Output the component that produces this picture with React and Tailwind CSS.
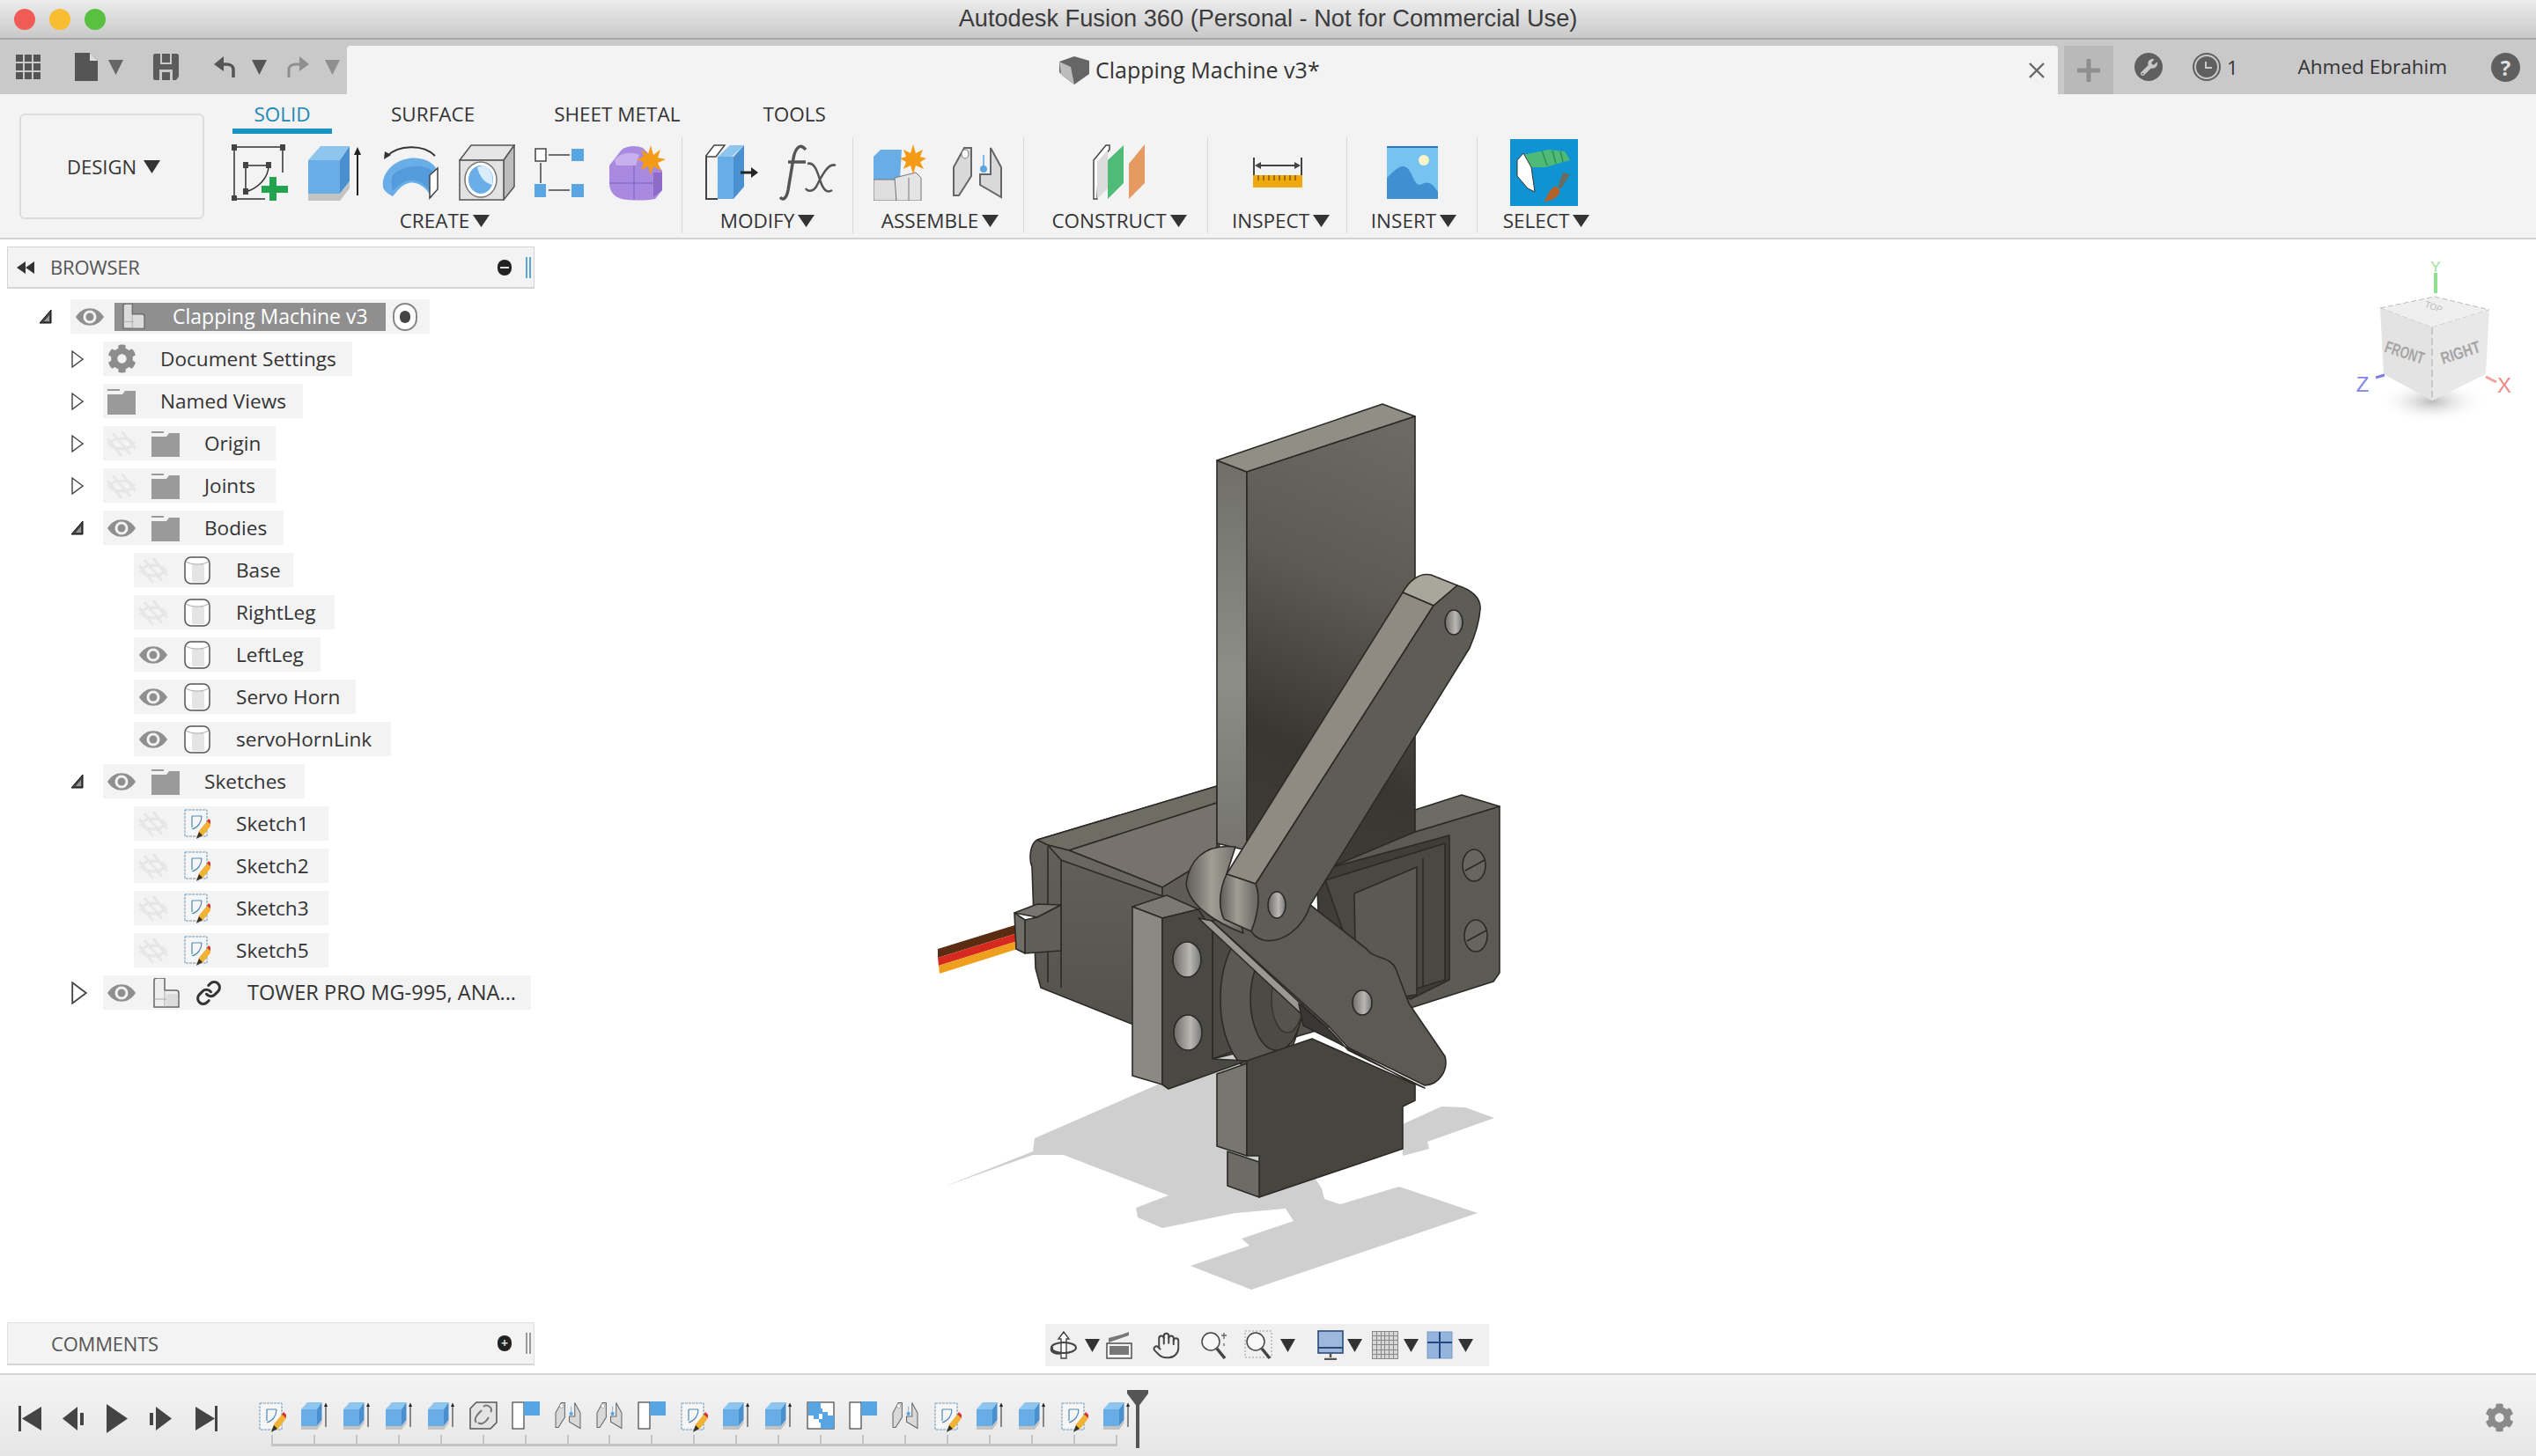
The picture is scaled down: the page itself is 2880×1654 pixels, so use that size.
import React from "react";
import { FaCog, FaWrench } from "react-icons/fa";
import { Link as LinkIcon, Hand } from "lucide-react";

const S = ({ w, h, vw, vh, children, className = "" }) => (
  <svg width={w} height={h} viewBox={`0 0 ${vw || w} ${vh || h}`} className={`shrink-0 block ${className}`}>{children}</svg>
);

const Caret = ({ w = 15, h = 13, c = "#333" }) => (
  <svg width={w} height={h} viewBox="0 0 10 10" preserveAspectRatio="none" className="shrink-0 block"><polygon points="0,0 10,0 5,10" fill={c} /></svg>
);

const SketchCreate = () => (
  <S w={64} h={64}>
    <g stroke="#333" strokeWidth="1.5" fill="none">
      <path d="M3 3H58M3 3V62M3 62H38M58 3V32" />
      <path d="M16 24V52M16 24H42M42 24C42 38 30 50 16 54" />
    </g>
    <g fill="#444">
      <rect x="0" y="0" width="6" height="7" /><rect x="55" y="0" width="6" height="7" /><rect x="0" y="58" width="6" height="7" />
      <rect x="13" y="20" width="6" height="7" /><rect x="39" y="20" width="6" height="7" /><rect x="13" y="50" width="6" height="7" />
    </g>
    <path d="M43 37H51V47H64V55H51V65H43V55H34V47H43Z" fill="#22a34f" />
  </S>
);
const Extrude = ({ w = 60, h = 64 }) => (
  <S w={w} h={h} vw={60} vh={64}>
    <polygon points="0,18 36,18 36,56 0,56" fill="#69ade6" />
    <polygon points="0,18 14,2 47,2 36,18" fill="#8ec5ef" />
    <polygon points="36,18 47,2 47,42 36,56" fill="#4a90d0" />
    <polygon points="0,56 36,56 47,42 47,50 36,64 0,64" fill="#c3c3c3" />
    <path d="M56 58V8" stroke="#222" strokeWidth="2" />
    <polygon points="52,12 56,3 60,12" fill="#222" />
  </S>
);
const Revolve = () => (
  <S w={64} h={62}>
    <path d="M6 12C18 0 46 -2 60 12" stroke="#333" strokeWidth="2" fill="none" />
    <polygon points="2,16 3,7 10,11" fill="#333" />
    <path d="M1 48C-1 32 12 18 30 15C44 13 58 18 62 28C62 40 62 48 56 60C50 46 38 41 30 43C22 45 18 51 12 58C8 56 3 53 1 48Z" fill="#6aaee8" />
    <path d="M12 34C20 24 44 20 56 28C60 34 58 46 54 52C46 40 34 38 26 41C20 44 16 48 12 52C10 46 10 40 12 34Z" fill="#539bdb" />
    <path d="M54 34L63 26V50L54 60Z" fill="#fff" stroke="#444" strokeWidth="1.5" />
  </S>
);
const Hole = () => (
  <S w={64} h={64}>
    <polygon points="1,18 14,1 63,1 51,18" fill="#e6e6e6" stroke="#555" strokeWidth="1.5" />
    <polygon points="51,18 63,1 63,48 51,63" fill="#bdbdbd" stroke="#555" strokeWidth="1.5" />
    <rect x="1" y="18" width="50" height="45" fill="#e3e3e3" stroke="#555" strokeWidth="1.5" />
    <ellipse cx="25" cy="40" rx="18" ry="20" fill="#fff" stroke="#777" strokeWidth="1.5" />
    <ellipse cx="25" cy="40" rx="14" ry="16" fill="#6aaee8" />
    <path d="M21 26C24 38 30 44 38 46C40 36 36 26 27 24Z" fill="#d9ecfb" />
  </S>
);
const Pattern = () => (
  <S w={56} h={60}>
    <rect x="1" y="3" width="12" height="14" fill="#fff" stroke="#444" strokeWidth="1.5" />
    <rect x="42" y="3" width="14" height="14" fill="#5aa6e2" />
    <rect x="0" y="43" width="13" height="15" fill="#5aa6e2" />
    <rect x="42" y="43" width="14" height="15" fill="#5aa6e2" />
    <path d="M16 10H40M7 19V42M16 50H40" stroke="#444" strokeWidth="1.5" />
  </S>
);
const PurpleNew = () => (
  <S w={64} h={64}>
    <path d="M14 6C20 1 32 1 38 4L48 14L60 30V52L52 62C40 64 26 64 14 62C6 60 0 54 0 44V24Z" fill="#a98ae0" />
    <path d="M6 18C12 9 26 8 34 12L30 24H8Z" fill="#c6b0ee" />
    <path d="M0 44H60M28 24V62" stroke="#8a6cc9" strokeWidth="1.5" fill="none" />
    <path d="M50 32H60V52L50 60Z" fill="#8c6bc9" />
    <polygon points="47,1 50,12 58,6 55,15 64,17 55,21 59,30 50,25 47,35 44,25 36,29 39,20 31,17 39,14 36,6 44,11" fill="#f39a16" />
  </S>
);
const PressPull = () => (
  <S w={60} h={64}>
    <polygon points="0,14 10,1 22,1 12,14" fill="#fff" stroke="#444" strokeWidth="1.5" />
    <path d="M1 14V62H14" stroke="#444" strokeWidth="2" fill="#f5f5f5" />
    <polygon points="14,14 28,1 44,1 30,14" fill="#8ec5ef" />
    <polygon points="14,14 32,14 32,62 14,62" fill="#69ade6" />
    <polygon points="32,14 44,1 44,48 32,62" fill="#4a90d0" />
    <path d="M40 32H54" stroke="#222" strokeWidth="3" />
    <polygon points="52,26 60,32 52,38" fill="#222" />
  </S>
);
const Fx = () => (
  <S w={66} h={64}>
    <path d="M30 6C24 -2 18 4 16 16L10 52C8 62 4 64 1 60" stroke="#555" strokeWidth="3.5" fill="none" />
    <path d="M10 20H30" stroke="#555" strokeWidth="3.5" />
    <path d="M32 22C38 20 42 26 46 40C50 52 54 56 60 52M64 24C56 20 48 36 42 48C38 54 32 54 30 50" stroke="#555" strokeWidth="2.5" fill="none" />
  </S>
);
const NewAssembly = () => (
  <S w={60} h={64}>
    <polygon points="0,14 8,6 32,6 30,40 0,40" fill="#69ade6" />
    <rect x="0" y="40" width="26" height="24" fill="#dedede" stroke="#777" />
    <polygon points="24,38 48,32 54,38 54,64 26,64" fill="#e4e4e4" stroke="#777" />
    <path d="M40 38V64" stroke="#777" />
    <polygon points="45,0 48,10 56,6 53,14 60,16 53,20 57,28 48,24 45,34 42,24 34,28 37,20 30,16 37,14 34,6 42,10" fill="#f39a16" />
  </S>
);
const Joint = ({ w = 58, h = 60 }) => (
  <S w={w} h={h} vw={58} vh={60}>
    <path d="M2 24L14 2H22V34L8 56H2Z" fill="#d9d9d9" stroke="#666" strokeWidth="2" />
    <path d="M56 24L44 2V32H32V44L56 58Z" fill="#d9d9d9" stroke="#666" strokeWidth="2" />
    <ellipse cx="15" cy="9" rx="4" ry="5" fill="#fff" stroke="#777" />
    <circle cx="36" cy="26" r="4" fill="#5aa6e2" />
    <path d="M36 10V22" stroke="#5aa6e2" strokeWidth="1.5" />
  </S>
);
const Construct = () => (
  <S w={60} h={64}>
    <polygon points="2,18 16,1 20,1 20,6 8,20 6,62 2,62" fill="#fff" stroke="#444" strokeWidth="1.5" />
    <polygon points="6,20 18,6 18,50 6,62" fill="#dcdcdc" />
    <polygon points="18,62 18,18 36,1 36,44" fill="#4fbb76" />
    <polygon points="42,62 42,22 60,0 60,44" fill="#e69a62" />
  </S>
);
const Inspect = () => (
  <S w={56} h={34}>
    <path d="M1 0V20M55 0V20M5 9H51" stroke="#444" strokeWidth="2" />
    <polygon points="2,9 9,5 9,13" fill="#444" /><polygon points="54,9 47,5 47,13" fill="#444" />
    <rect x="0" y="20" width="56" height="14" fill="#efa90e" />
    <path d="M6 20V26M12 20V26M18 20V26M24 20V26M30 20V26M36 20V26M42 20V26M48 20V26" stroke="#8a5a00" strokeWidth="1.5" />
  </S>
);
const Insert = () => (
  <S w={58} h={60}>
    <rect width="58" height="60" fill="#76c3f2" />
    <rect width="58" height="2" fill="#2d77b8" />
    <circle cx="42" cy="16" r="6" fill="#fff3c9" />
    <path d="M0 60V36C8 28 16 20 22 24C30 30 30 44 38 44C46 40 50 40 58 52V60Z" fill="#3f8fd1" />
  </S>
);
const SelectIcon = () => (
  <div className="w-[77px] h-[76px] bg-[#0f93d2] shrink-0">
    <S w={77} h={76}>
      <polygon points="14,18 44,12 62,14 68,24 40,32 22,32" fill="#4fb978" />
      <path d="M36 13L42 30M48 13L52 28M57 14L60 26" stroke="#2c8f54" strokeWidth="1.5" />
      <polygon points="8,24 15,16 24,32 28,60 20,56 8,42" fill="#fff" stroke="#333" strokeWidth="1" />
      <path d="M60 38L68 40L58 56L54 54Z" fill="#6b6b60" />
      <path d="M50 54C58 54 58 62 52 66C48 70 42 70 38 72C42 66 44 58 50 54Z" fill="#b5622a" />
    </S>
  </div>
);

const Eye = ({ off }) =>
  off ? (
    <S w={32} h={28}>
      <g stroke="#e6e6e6" strokeWidth="3" fill="none">
        <path d="M2 14C8 6 24 6 30 14C24 22 8 22 2 14Z" />
        <path d="M6 2L26 26M0 8L16 28M16 0L32 20" />
      </g>
    </S>
  ) : (
    <S w={32} h={24}>
      <path d="M0 12C8 -1 24 -1 32 12C24 25 8 25 0 12Z" fill="#8f8f8f" />
      <circle cx="16" cy="12" r="7.5" fill="#f3f3f3" />
      <circle cx="16" cy="12" r="4.5" fill="#8f8f8f" />
    </S>
  );
const Folder = () => (
  <S w={32} h={30}>
    <path d="M0 1H14V3H0Z" fill="#9a9a9a" />
    <path d="M0 7H17L20 3H32V30H0Z" fill="#9a9a9a" />
  </S>
);
const Body = () => (
  <S w={30} h={32}>
    <rect x="1" y="1" width="28" height="30" rx="7" fill="#fff" stroke="#555" strokeWidth="1.5" />
    <rect x="9" y="9" width="14" height="20" fill="#e4e4e4" />
    <path d="M2 6C8 10 22 10 28 6" stroke="#aaa" fill="none" />
  </S>
);
const SmallSketch = ({ w = 30, h = 36 }) => (
  <S w={w} h={h} vw={30} vh={36}>
    <rect x="1" y="2" width="25" height="30" fill="#f6f6f6" stroke="#6d98b8" strokeWidth="1" strokeDasharray="3 1" />
    <path d="M9 9H20M9 9V22M20 9C20 16 16 22 9 24" stroke="#4d89b5" strokeWidth="1.2" fill="none" />
    <polygon points="14,34 17,26 26,15 31,19 22,31" fill="#f2b233" />
    <polygon points="26,15 28,12 32,16 31,19" fill="#d8342c" />
    <polygon points="14,35 17,27 21,31" fill="#333" />
  </S>
);
const Comp = ({ w = 30, h = 34, fill = "#eee" }) => (
  <S w={w} h={h} vw={30} vh={34}>
    <path d="M1 33V3C1 1 2 0 4 0H13V14H26C28 14 29 15 29 17V33Z" fill={fill} stroke="#666" strokeWidth="1.5" />
    <path d="M13 14V33M1 24H29" stroke="#aaa" />
    <rect x="15" y="18" width="13" height="14" fill="#dcdcdc" />
  </S>
);
const ChevOpen = () => (
  <S w={14} h={16}><polygon points="13,0 13,15 0,15" fill="#444" stroke="#111" strokeWidth="1" /><polygon points="11,6 11,13 5,13" fill="#999" /></S>
);
const ChevClosed = ({ big }) => (
  <S w={big ? 20 : 14} h={big ? 26 : 20} vw={14} vh={20}><polygon points="1,1 13,10 1,19" fill="#fff" stroke="#444" strokeWidth="1.4" /></S>
);

const rows = [
  { d: 1, ch: "c", ico: "gear", t: "Document Settings", w: "w-[283px]" },
  { d: 1, ch: "c", ico: "folder", t: "Named Views", w: "w-[227px]" },
  { d: 1, ch: "c", eye: "off", ico: "folder", t: "Origin", w: "w-[196px]" },
  { d: 1, ch: "c", eye: "off", ico: "folder", t: "Joints", w: "w-[196px]" },
  { d: 1, ch: "o", eye: "on", ico: "folder", t: "Bodies", w: "w-[205px]" },
  { d: 2, eye: "off", ico: "body", t: "Base", w: "w-[181px]" },
  { d: 2, eye: "off", ico: "body", t: "RightLeg", w: "w-[228px]" },
  { d: 2, eye: "on", ico: "body", t: "LeftLeg", w: "w-[212px]" },
  { d: 2, eye: "on", ico: "body", t: "Servo Horn", w: "w-[252px]" },
  { d: 2, eye: "on", ico: "body", t: "servoHornLink", w: "w-[292px]" },
  { d: 1, ch: "o", eye: "on", ico: "folder", t: "Sketches", w: "w-[229px]" },
  { d: 2, eye: "off", ico: "sketch", t: "Sketch1", w: "w-[221px]" },
  { d: 2, eye: "off", ico: "sketch", t: "Sketch2", w: "w-[221px]" },
  { d: 2, eye: "off", ico: "sketch", t: "Sketch3", w: "w-[221px]" },
  { d: 2, eye: "off", ico: "sketch", t: "Sketch5", w: "w-[221px]" },
];

const Row = ({ r }) => {
  const icon = r.ico === "gear" ? <FaCog size={33} color="#8d8d8d" className="shrink-0" /> : r.ico === "folder" ? <Folder /> : r.ico === "body" ? <Body /> : <SmallSketch />;
  if (r.d === 2) {
    return (
      <div className="flex items-center h-[39px] ml-[152px]">
        <div className={`flex items-center h-[39px] bg-[#f3f3f3] pl-[6px] ${r.w}`}>
          <span className="w-[32px] flex justify-center shrink-0"><Eye off={r.eye === "off"} /></span>
          <span className="w-[30px] ml-[19px] shrink-0">{icon}</span>
          <span className="ml-[29px] whitespace-nowrap">{r.t}</span>
        </div>
      </div>
    );
  }
  return (
    <div className="flex items-center h-[39px] ml-[81px]">
      <span className="w-[36px] shrink-0">{r.ch === "c" ? <ChevClosed /> : <ChevOpen />}</span>
      <div className={`flex items-center h-[39px] bg-[#f3f3f3] pl-[5px] ${r.w}`}>
        {r.eye && <span className="w-[32px] flex justify-center shrink-0 mr-[18px]"><Eye off={r.eye === "off"} /></span>}
        <span className="w-[32px] shrink-0">{icon}</span>
        <span className="ml-[28px] whitespace-nowrap">{r.t}</span>
      </div>
    </div>
  );
};

const Group = ({ w, label, children, sep = true, lp = "" }) => (
  <div className={`flex flex-col items-center shrink-0 h-[109px] ${w} ${sep ? "border-r border-[#d8d8d8]" : ""}`}>
    <div className="flex items-center justify-center h-[80px] w-full">{children}</div>
    <div className={`flex items-center gap-[4px] h-[29px] text-[22.5px] text-[#333] ${lp}`}>
      <span>{label}</span><Caret w={19} h={14} />
    </div>
  </div>
);

const Model = () => (
  <svg className="absolute inset-0 block" width="2880" height="1288" viewBox="0 272 2880 1288">
    <defs>
      <linearGradient id="pf" gradientUnits="userSpaceOnUse" x1="1620" y1="480" x2="1420" y2="950">
        <stop offset="0" stopColor="#6c6c64" /><stop offset="0.4" stopColor="#5b5a53" /><stop offset="0.78" stopColor="#38362f" /><stop offset="1" stopColor="#3e3c36" />
      </linearGradient>
      <linearGradient id="ps" x1="0" y1="0" x2="0" y2="1">
        <stop offset="0" stopColor="#6f6e68" /><stop offset="0.55" stopColor="#8e8e89" /><stop offset="1" stopColor="#75746e" />
      </linearGradient>
      <linearGradient id="cy" x1="0" y1="0" x2="1" y2="0">
        <stop offset="0" stopColor="#5d5c56" /><stop offset="0.45" stopColor="#a09e95" /><stop offset="1" stopColor="#66655e" />
      </linearGradient>
      <linearGradient id="ho" x1="0" y1="0" x2="1" y2="0">
        <stop offset="0" stopColor="#6b6a66" /><stop offset="0.6" stopColor="#b9b8b3" /><stop offset="1" stopColor="#77767a" />
      </linearGradient>
      <linearGradient id="bd" x1="0" y1="0" x2="0" y2="1">
        <stop offset="0" stopColor="#66645d" /><stop offset="1" stopColor="#54524b" />
      </linearGradient>
    </defs>
    <g fill="#cfcfcf">
      <polygon points="1072,1348 1173,1308 1175,1293 1400,1195 1501,1350 1504,1362 1522,1368 1589,1348 1678,1378 1421,1465 1352,1438 1419,1415 1410,1407 1469,1387 1460,1373 1403,1378 1320,1395 1292,1383 1290,1372 1327,1358 1208,1312 1173,1312" />
      <polygon points="1593,1277 1637,1257 1664,1258 1697,1270 1621,1297 1623,1305 1593,1313" />
    </g>
    <g stroke="#2b2a27" strokeWidth="1.6" strokeLinejoin="round">
      <polygon points="1065,1078 1162,1048 1162,1058 1065,1088" fill="#5a2c12" stroke="none" />
      <polygon points="1065,1088 1162,1058 1162,1067 1066,1097" fill="#d62a1f" stroke="none" />
      <polygon points="1066,1097 1162,1067 1162,1076 1067,1106" fill="#ef9f1e" stroke="none" />
      {/* servo body */}
      <path d="M1178,954 C1170,958 1168,975 1172,985 L1176,1100 L1182,1122 L1290,1165 L1390,1100 L1382,893 Z" fill="url(#bd)" />
      <polygon points="1178,954 1382,893 1382,912 1214,966 1190,960" fill="#6f6c64" />
      <polygon points="1214,966 1382,912 1382,970 1320,1008" fill="#77736c" />
      <polygon points="1190,960 1214,966 1320,1008 1320,1018 1205,977" fill="#68665f" />
      <path d="M1190,962V1116M1205,977V1122" fill="none" />
      {/* connector */}
      <polygon points="1152,1037 1178,1027 1205,1028 1178,1042" fill="#77756e" />
      <polygon points="1178,1042 1205,1028 1205,1080 1164,1083 1164,1045" fill="#5f5e57" />
      <polygon points="1152,1037 1164,1045 1164,1083 1154,1078" fill="#706e67" />
      {/* plate */}
      <polygon points="1382,523 1416,536 1416,966 1382,958" fill="url(#ps)" />
      <polygon points="1382,523 1570,459 1607,473 1416,536" fill="#908f86" />
      <polygon points="1416,536 1607,473 1607,960 1416,1020" fill="url(#pf)" />
      {/* right flange */}
      <polygon points="1607,945 1703,916 1703,1105 1696,1115 1602,1145 1500,1110 1500,990" fill="#5b5a53" />
      <polygon points="1607,920 1660,903 1703,916 1607,945" fill="#6d6c64" />
      <polygon points="1495,990 1646,949 1646,1113 1602,1135 1500,1100" fill="#3f3d38" />
      <polygon points="1505,1000 1641,958 1641,1113 1609,1123 1540,1100" fill="#4a4843" />
      <polygon points="1538,1015 1609,985 1609,1130 1540,1140" fill="#5a5952" />
      <path d="M1616,975V1120" fill="none" />
      <ellipse cx="1674" cy="983" rx="13" ry="18" fill="#66655e" />
      <path d="M1664,989L1686,977" fill="none" />
      <ellipse cx="1676" cy="1063" rx="13" ry="18" fill="#66655e" />
      <path d="M1666,1069L1688,1057" fill="none" />
      {/* center region */}
      <polygon points="1361,1033 1420,1010 1600,1140 1430,1190 1377,1203" fill="#55534d" />
      <polygon points="1377,1057 1400,1070 1425,1185 1377,1203" fill="#4b4943" />
      <ellipse cx="1432" cy="1135" rx="46" ry="85" fill="#5b5953" />
      <ellipse cx="1450" cy="1135" rx="30" ry="58" fill="#4c4a45" />
      <ellipse cx="1462" cy="1135" rx="18" ry="38" fill="#55534e" stroke="#383632" />
      {/* left flange */}
      <polygon points="1286,1030 1325,1017 1361,1033 1320,1043" fill="#7b7972" />
      <polygon points="1286,1030 1320,1043 1320,1232 1286,1222" fill="#8a8983" />
      <polygon points="1320,1043 1361,1033 1377,1057 1377,1203 1416,1205 1327,1237 1320,1232" fill="#4a4843" />
      <ellipse cx="1348" cy="1090" rx="16" ry="20" fill="url(#ho)" />
      <ellipse cx="1349" cy="1173" rx="16" ry="20" fill="url(#ho)" />
      {/* lower plate */}
      <polygon points="1382,1220 1416,1208 1416,1313 1382,1302" fill="#77766f" />
      <polygon points="1416,1205 1490,1180 1607,1232 1607,1250 1593,1257 1593,1305 1430,1360 1430,1313 1416,1313" fill="#48453f" />
      <polygon points="1394,1308 1430,1320 1430,1360 1394,1347" fill="#6c6b65" />
      {/* horn */}
      <polygon points="1361,1043 1376,1046 1505,1166 1495,1168" fill="#9a9890" />
      <path d="M1376,1046 L1488,1028 L1552,1078 C1560,1090 1577,1085 1585,1100 L1600,1140 L1641,1200 C1645,1215 1635,1232 1618,1233 L1531,1190 L1508,1165 Z" fill="#5d5a53" />
      <path d="M1475,1140 L1510,1170 L1531,1193 L1618,1236 L1600,1228 L1520,1185 L1480,1165 Z" fill="#3a3834" />
      <ellipse cx="1547" cy="1139" rx="11" ry="14" fill="url(#ho)" />
      {/* link */}
      <path d="M1347,1004 C1350,980 1365,958 1403,962 L1393,993 L1395,1000 L1412,1060 C1385,1050 1350,1030 1347,1004Z" fill="url(#cy)" />
      <path d="M1593,673 C1600,660 1612,650 1625,653 L1655,665 L1628,688 Z" fill="#a9a69b" />
      <polygon points="1593,673 1628,688 1426,1004 1393,993" fill="#8f8b82" />
      <path d="M1628,688 L1655,665 C1672,670 1682,680 1681,692 C1680,705 1675,722 1669,736 L1488,1028 C1480,1055 1455,1072 1435,1068 C1428,1066 1422,1062 1420,1055 C1428,1035 1430,1015 1426,1004 Z" fill="#5d5c55" />
      <path d="M1393,993 L1426,1004 C1432,1020 1428,1040 1421,1058 L1390,1044 C1383,1030 1385,1010 1393,993Z" fill="url(#cy)" />
      <ellipse cx="1651" cy="707" rx="10" ry="14" fill="url(#ho)" />
      <ellipse cx="1450" cy="1028" rx="10" ry="15" fill="url(#ho)" />
    </g>
  </svg>
);

const ViewCube = () => (
  <svg className="absolute top-[18px] right-[10px] block" width="200" height="190" viewBox="2670 290 200 190">
    <defs>
      <radialGradient id="vs"><stop offset="0" stopColor="#bdbdbd" /><stop offset="1" stopColor="#ffffff" stopOpacity="0" /></radialGradient>
    </defs>
    <ellipse cx="2762" cy="456" rx="62" ry="24" fill="url(#vs)" />
    <path d="M2766,310V333" stroke="#8fe08f" strokeWidth="4" />
    <text x="2766" y="309" textAnchor="middle" fontSize="17" fill="#9be59b" fontFamily="Liberation Sans">Y</text>
    <polygon points="2703,350 2765,337 2827,352 2762,372" fill="#efefef" stroke="#bbb" strokeDasharray="6 3" />
    <polygon points="2703,350 2762,372 2762,455 2707,425" fill="#e3e3e3" />
    <polygon points="2762,372 2827,352 2823,425 2762,455" fill="#e8e8e8" />
    <path d="M2762,372V455" stroke="#aaa" strokeDasharray="8 4" />
    <text x="2764" y="352" textAnchor="middle" fontSize="10" fill="#bbb" fontFamily="Liberation Sans" transform="rotate(20 2764 348)">TOP</text>
    <text x="2731" y="407" textAnchor="middle" fontSize="19" fontWeight="700" fill="#a5a5a5" fontFamily="Liberation Sans" textLength="46" lengthAdjust="spacingAndGlyphs" transform="rotate(18 2731 400)">FRONT</text>
    <text x="2794" y="407" textAnchor="middle" fontSize="19" fontWeight="700" fill="#a5a5a5" fontFamily="Liberation Sans" textLength="46" lengthAdjust="spacingAndGlyphs" transform="rotate(-18 2794 400)">RIGHT</text>
    <path d="M2698,429L2708,426" stroke="#7f7fe8" strokeWidth="3" />
    <text x="2683" y="445" textAnchor="middle" fontSize="24" fill="#8585ea" fontFamily="Liberation Sans">Z</text>
    <path d="M2823,428L2835,434" stroke="#f0a0a0" strokeWidth="3" />
    <text x="2844" y="446" textAnchor="middle" fontSize="24" fill="#ee8888" fontFamily="Liberation Sans">X</text>
  </svg>
);

const NavBar = () => (
  <div className="absolute left-[1187px] bottom-[8px] w-[504px] h-[48px] bg-[#f0f0f0] flex items-center">
    <S w={32} h={32} className="ml-[5px]">
      <path d="M16 1L10 9H13V31H19V9H22Z" fill="#fff" stroke="#444" strokeWidth="1.4" />
      <ellipse cx="16" cy="19" rx="14" ry="6" fill="none" stroke="#444" strokeWidth="2" />
      <path d="M3 18C0 24 8 26 12 25" stroke="#444" strokeWidth="3" fill="none" />
    </S>
    <span className="ml-[8px]"><Caret w={17} h={15} /></span>
    <S w={30} h={32} className="ml-[7px]">
      <rect x="1" y="14" width="28" height="17" fill="#f5f5f5" stroke="#444" strokeWidth="1.4" />
      <rect x="4" y="17" width="22" height="10" fill="#777" />
      <path d="M3 13L26 5V1L18 4L3 8Z" fill="#777" />
    </S>
    <Hand size={33} strokeWidth={1.4} color="#444" className="ml-[22px] shrink-0" />
    <S w={34} h={32} className="ml-[22px]">
      <circle cx="12" cy="12" r="10" fill="#f8f8f8" stroke="#444" strokeWidth="1.5" />
      <path d="M19 20L28 31" stroke="#444" strokeWidth="3.5" />
      <path d="M27 2V9M24 5H30M27 14V17" stroke="#666" strokeWidth="1.3" />
    </S>
    <S w={34} h={34} className="ml-[16px]">
      <rect x="1" y="1" width="30" height="30" fill="none" stroke="#999" strokeDasharray="2 2" />
      <circle cx="13" cy="13" r="10" fill="#f8f8f8" stroke="#444" strokeWidth="1.5" />
      <path d="M20 21L29 32" stroke="#444" strokeWidth="3.5" />
    </S>
    <span className="ml-[7px]"><Caret w={17} h={15} /></span>
    <S w={30} h={34} className="ml-[25px]">
      <rect x="1" y="1" width="28" height="25" fill="#9db8dc" stroke="#2b4a78" strokeWidth="1.6" />
      <rect x="1" y="19" width="28" height="2" fill="#2b4a78" />
      <path d="M15 26V31M8 33H22" stroke="#555" strokeWidth="2.5" />
    </S>
    <span className="ml-[4px]"><Caret w={17} h={15} /></span>
    <div className="ml-[11px] w-[30px] h-[32px] shrink-0 bg-[#888] grid grid-cols-6 grid-rows-6 gap-[1px] p-[1px]">
      {Array.from({ length: 36 }).map((_, i) => <span key={i} className="bg-[#d8d8d8]" />)}
    </div>
    <span className="ml-[6px]"><Caret w={17} h={15} /></span>
    <S w={30} h={32} className="ml-[9px]">
      <rect x="1" y="1" width="28" height="30" fill="#95b4dc" stroke="#7c9ac4" />
      <path d="M15 1V31M1 13H29" stroke="#234a80" strokeWidth="2" />
    </S>
    <span className="ml-[6px]"><Caret w={17} h={15} /></span>
  </div>
);

const Flag = () => (
  <S w={32} h={32}>
    <rect x="1" y="1" width="13" height="30" fill="#fff" stroke="#444" strokeWidth="1.2" />
    <rect x="14" y="0" width="18" height="16" fill="#57a5e2" />
  </S>
);
const LinkBox = () => (
  <S w={32} h={32}>
    <path d="M8 1H31V24L24 31H1V8Z" fill="#e4e4e4" stroke="#555" strokeWidth="1.5" />
    <path d="M8 24C4 20 10 14 14 10M16 6C20 2 28 8 24 12M10 24C14 28 20 22 22 18" stroke="#777" strokeWidth="2" fill="none" />
  </S>
);
const Combine = () => (
  <S w={32} h={32}>
    <rect x="1" y="1" width="30" height="30" fill="#fff" stroke="#444" strokeWidth="1.2" />
    <path d="M16 1H2V16H8V20H14V14H18V8H16ZM16 31H31V16H24V12H18V20H14V24H16Z" fill="#57a5e2" />
  </S>
);
const tl = ["s","e","e","e","e","l","f","j","j","f","s","e","e","c","f","j","s","e","e","s","e"];
const TlIcon = ({ k }) => {
  if (k === "s") return <SmallSketch w={32} h={36} />;
  if (k === "e") return <Extrude w={30} h={32} />;
  if (k === "l") return <LinkBox />;
  if (k === "f") return <Flag />;
  if (k === "j") return <Joint w={30} h={32} />;
  return <Combine />;
};

export default function App() {
  return (
    <div className="w-[2880px] h-[1654px] flex flex-col overflow-hidden bg-white font-['Open_Sans',sans-serif] text-[#333]">
      {/* title bar */}
      <div className="h-[45px] shrink-0 grid grid-cols-[1fr_auto_1fr] items-center bg-gradient-to-b from-[#ececec] to-[#c9c9c9] border-b-2 border-[#a8a8a8]">
        <div className="flex items-center pl-[16px] gap-[16px]">
          <span className="w-[24px] h-[24px] rounded-full bg-[#f15b55]" />
          <span className="w-[24px] h-[24px] rounded-full bg-[#f8bd30]" />
          <span className="w-[24px] h-[24px] rounded-full bg-[#58c13f]" />
        </div>
        <div className="font-['Liberation_Sans',sans-serif] text-[27.2px] text-[#3c3c3c] whitespace-nowrap">Autodesk Fusion 360 (Personal - Not for Commercial Use)</div>
        <div />
      </div>

      {/* toolbar / tab row */}
      <div className="h-[62px] shrink-0 flex bg-[#c9c9c9]">
        <div className="w-[394px] shrink-0 flex items-center pl-[18px]">
          <div className="w-[28px] h-[28px] grid grid-cols-3 grid-rows-3 gap-[2px] shrink-0">
            {Array.from({ length: 9 }).map((_, i) => <span key={i} className="bg-[#555]" />)}
          </div>
          <S w={26} h={32} className="ml-[39px]"><path d="M0 0H17L26 9V32H0Z" fill="#555" /><path d="M17 0L26 9H17Z" fill="#ddd" /></S>
          <span className="ml-[12px]"><Caret w={17} h={17} c="#666" /></span>
          <S w={29} h={30} className="ml-[34px]">
            <path d="M2 0H27C28 0 29 1 29 2V26L26 30H2C1 30 0 29 0 28V2C0 1 1 0 2 0Z" fill="#5c5c5c" />
            <path d="M8 0H21V12H8Z" fill="#c9c9c9" /><path d="M10 0H19V10H10Z" fill="#5c5c5c" />
            <path d="M7 18H22V30H7Z" fill="#c9c9c9" /><path d="M10 21H19V30H10Z" fill="#5c5c5c" />
          </S>
          <S w={25} h={24} className="ml-[40px]">
            <path d="M22 24V15C22 11 18 9 14 9H8" stroke="#555" strokeWidth="3.5" fill="none" />
            <polygon points="0,9 11,0 11,17" fill="#555" />
          </S>
          <span className="ml-[18px]"><Caret w={17} h={17} c="#555" /></span>
          <S w={26} h={24} className="ml-[22px]">
            <path d="M3 24V15C3 11 7 9 11 9H18" stroke="#8f8f8f" strokeWidth="3" fill="none" />
            <polygon points="26,9 15,0 15,17" fill="#8f8f8f" />
          </S>
          <span className="ml-[18px]"><Caret w={17} h={17} c="#8f8f8f" /></span>
        </div>
        <div className="w-[1943px] shrink-0 mt-[7px] bg-[#f3f3f3] rounded-t-[4px] flex items-center pl-[809px] pr-[14px]">
          <S w={34} h={32}>
            <polygon points="0,6 17,0 34,5 34,20 17,32 4,22 0,18" fill="#666" />
            <polygon points="0,6 13,12 17,32 2,20" fill="#bdbdbd" />
          </S>
          <span className="ml-[7px] text-[25px] text-[#333] whitespace-nowrap">Clapping Machine v3*</span>
          <svg width="20" height="20" viewBox="0 0 20 20" className="ml-auto shrink-0"><path d="M2 2L18 18M18 2L2 18" stroke="#666" strokeWidth="2.4" /></svg>
        </div>
        <div className="flex-1 flex items-center min-w-0">
          <div className="ml-[7px] mt-[7px] w-[56px] h-[55px] bg-[#b9b9b9] flex items-center justify-center shrink-0">
            <svg width="26" height="26" viewBox="0 0 26 26"><path d="M13 0V26M0 13H26" stroke="#8e8e8e" strokeWidth="5" /></svg>
          </div>
          <div className="ml-[24px] w-[32px] h-[32px] rounded-full bg-[#5f5f5f] flex items-center justify-center shrink-0"><FaWrench size={19} color="#c9c9c9" /></div>
          <div className="ml-[34px] w-[32px] h-[32px] rounded-full border-2 border-[#5f5f5f] p-[2px] shrink-0">
            <div className="w-full h-full rounded-full bg-[#5f5f5f] flex items-center justify-center">
              <svg width="16" height="16" viewBox="0 0 16 16"><path d="M7 2V9H14" stroke="#c9c9c9" strokeWidth="2" fill="none" /></svg>
            </div>
          </div>
          <span className="ml-[7px] text-[22px]">1</span>
          <span className="ml-[68px] text-[22.5px] whitespace-nowrap">Ahmed Ebrahim</span>
          <div className="ml-[50px] w-[33px] h-[33px] rounded-full bg-[#5f5f5f] text-[#e0e0e0] text-[24px] font-bold leading-[33px] text-center shrink-0">?</div>
        </div>
      </div>

      {/* ribbon */}
      <div className="h-[165px] shrink-0 bg-[#f3f3f3] flex border-b-2 border-b-[#d2d2d2]">
        <div className="ml-[22px] mt-[22px] w-[210px] h-[120px] shrink-0 border-2 border-[#dcdcdc] rounded-[6px] flex items-center justify-center gap-[8px] pl-[4px] text-[22px]">
          <span>DESIGN</span><Caret w={19} h={15} />
        </div>
        <div className="ml-[12px] flex flex-col">
          <div className="h-[49px] flex items-start pt-[7px] text-[22.5px]">
            <div className="ml-[20px] w-[113px] h-[38px] text-center text-[#1d87b5] border-b-[6px] border-[#1b92c4] leading-[32px]">SOLID</div>
            <div className="ml-[67px] leading-[32px]">SURFACE</div>
            <div className="ml-[90px] leading-[32px]">SHEET METAL</div>
            <div className="ml-[94px] leading-[32px]">TOOLS</div>
          </div>
          <div className="flex">
            <Group w="w-[531px]" label="CREATE" lp="mr-[8px]">
              <div className="flex items-center">
                <SketchCreate />
                <span className="ml-[23px]"><Extrude /></span>
                <span className="ml-[24px]"><Revolve /></span>
                <span className="ml-[23px]"><Hole /></span>
                <span className="ml-[22px]"><Pattern /></span>
                <span className="ml-[29px]"><PurpleNew /></span>
              </div>
            </Group>
            <Group w="w-[194px]" label="MODIFY">
              <div className="flex items-center ml-[8px]"><PressPull /><span className="ml-[24px]"><Fx /></span></div>
            </Group>
            <Group w="w-[194px]" label="ASSEMBLE" lp="ml-[4px]">
              <div className="flex items-center"><NewAssembly /><span className="ml-[29px]"><Joint /></span></div>
            </Group>
            <Group w="w-[209px]" label="CONSTRUCT" lp="ml-[8px]">
              <span className="ml-[6px]"><Construct /></span>
            </Group>
            <Group w="w-[158px]" label="INSPECT" lp="ml-[8px]"><Inspect /></Group>
            <Group w="w-[148px]" label="INSERT" lp="ml-[4px]"><Insert /></Group>
            <Group w="w-[150px]" label="SELECT" sep={false} lp="ml-[6px]"><SelectIcon /></Group>
          </div>
        </div>
      </div>

      {/* viewport */}
      <div className="flex-1 relative bg-white min-h-0 flex flex-col justify-between pt-[8px] pb-[8px]">
        <Model />
        <ViewCube />
        <div className="relative flex flex-col">
          <div className="ml-[8px] w-[599px] h-[48px] bg-[#f3f3f3] border border-[#d5d5d5] border-b-2 flex items-center text-[#555] text-[22px] tracking-[-0.2px] shrink-0">
            <svg width="20" height="14" viewBox="0 0 20 14" className="ml-[10px]"><path d="M10 0V14L0 7ZM20 0V14L10 7Z" fill="#333" /></svg>
            <span className="ml-[18px]">BROWSER</span>
            <span className="ml-auto w-[16px] h-[18px] rounded-full bg-[#222] flex items-center justify-center"><span className="w-[10px] h-[2px] bg-[#ddd]" /></span>
            <span className="ml-[16px] mr-[3px] w-[6px] h-[24px] border-x-2 border-[#5aa6d0]" />
          </div>
          <div className="mt-[12px] flex flex-col gap-[9px] text-[22.6px] text-[#333]">
            <div className="flex items-center h-[39px] ml-[45px]">
              <span className="w-[35px] shrink-0"><ChevOpen /></span>
              <div className="flex items-center h-[39px] w-[408px] bg-[#f3f3f3] pl-[6px]">
                <Eye />
                <div className="ml-[12px] w-[308px] h-[32px] bg-[#8f8f8f] flex items-center pl-[8px] shrink-0">
                  <Comp w={28} h={29} fill="#dcdcdc" />
                  <span className="ml-[30px] text-white text-[23px] whitespace-nowrap">Clapping Machine v3</span>
                </div>
                <div className="ml-[8px] w-[28px] h-[32px] rounded-full bg-white border-2 border-[#888] flex items-center justify-center shrink-0">
                  <span className="w-[12px] h-[14px] rounded-full bg-[#444]" />
                </div>
              </div>
            </div>
            {rows.map((r) => <Row key={r.t} r={r} />)}
            <div className="flex items-center h-[39px] ml-[80px]">
              <span className="w-[37px] shrink-0"><ChevClosed big /></span>
              <div className="flex items-center h-[39px] w-[486px] bg-[#f3f3f3] pl-[5px]">
                <Eye />
                <span className="ml-[20px]"><Comp /></span>
                <LinkIcon size={30} strokeWidth={2.4} color="#333" className="ml-[18px] shrink-0" />
                <span className="ml-[29px] whitespace-nowrap text-[23.6px]">TOWER PRO MG-995, ANA...</span>
              </div>
            </div>
          </div>
        </div>
        <div className="relative ml-[8px] w-[599px] h-[49px] -translate-y-[1px] bg-[#f3f3f3] border border-[#e0e0e0] border-b-2 border-b-[#d5d5d5] flex items-center text-[#555] text-[22px] tracking-[-0.2px] pl-[49px] shrink-0">
          <span>COMMENTS</span>
          <span className="ml-auto w-[16px] h-[18px] rounded-full bg-[#222] flex items-center justify-center text-[#ddd] text-[14px] leading-none font-bold">+</span>
          <span className="ml-[16px] mr-[3px] w-[6px] h-[24px] border-x-2 border-[#999]" />
        </div>
        <NavBar />
      </div>

      {/* timeline */}
      <div className="h-[94px] shrink-0 relative flex items-start border-t-2 border-[#d4d4d4] bg-gradient-to-b from-[#f4f4f4] to-[#e6e6e6]">
        <div className="flex items-center mt-[33px] ml-[21px]">
          <svg width="26" height="29" viewBox="0 0 26 29" className="shrink-0"><rect width="3" height="29" fill="#444" /><polygon points="26,1 26,28 4,14.5" fill="#444" /></svg>
          <svg width="25" height="29" viewBox="0 0 25 29" className="ml-[24px] shrink-0"><polygon points="17,1 17,28 0,14.5" fill="#444" /><rect x="20" y="8" width="4" height="14" fill="#444" /></svg>
          <svg width="24" height="33" viewBox="0 0 24 33" className="ml-[25px] shrink-0"><polygon points="0,0 24,16.5 0,33" fill="#444" /></svg>
          <svg width="25" height="29" viewBox="0 0 25 29" className="ml-[25px] shrink-0"><rect x="0" y="8" width="4" height="14" fill="#444" /><polygon points="7,1 25,14.5 7,28" fill="#444" /></svg>
          <svg width="25" height="29" viewBox="0 0 25 29" className="ml-[27px] shrink-0"><polygon points="0,1 22,14.5 0,28" fill="#444" /><rect x="22" width="3" height="29" fill="#444" /></svg>
        </div>
        <div className="absolute left-[308px] top-[78px] w-[961px] h-[3px] bg-[#c4c4c4]" />
        <div className="ml-[38px] mt-[30px] flex">
          {tl.map((k, i) => (
            <div key={i} className="w-[47.95px] flex flex-col items-center shrink-0">
              <div className="h-[38px] flex items-start justify-center"><TlIcon k={k} /></div>
              <span className="w-[2px] h-[10px] bg-[#c4c4c4]" />
            </div>
          ))}
        </div>
        <svg width="24" height="68" viewBox="0 0 24 68" className="absolute left-[1280px] top-[17px]">
          <polygon points="0,0 24,0 24,4 12,20 0,4" fill="#555" />
          <rect x="10" y="10" width="4" height="56" fill="#555" />
        </svg>
        <FaCog size={33} color="#8a8a8a" className="ml-auto mr-[25px] mt-[32px] shrink-0" />
      </div>
    </div>
  );
}
